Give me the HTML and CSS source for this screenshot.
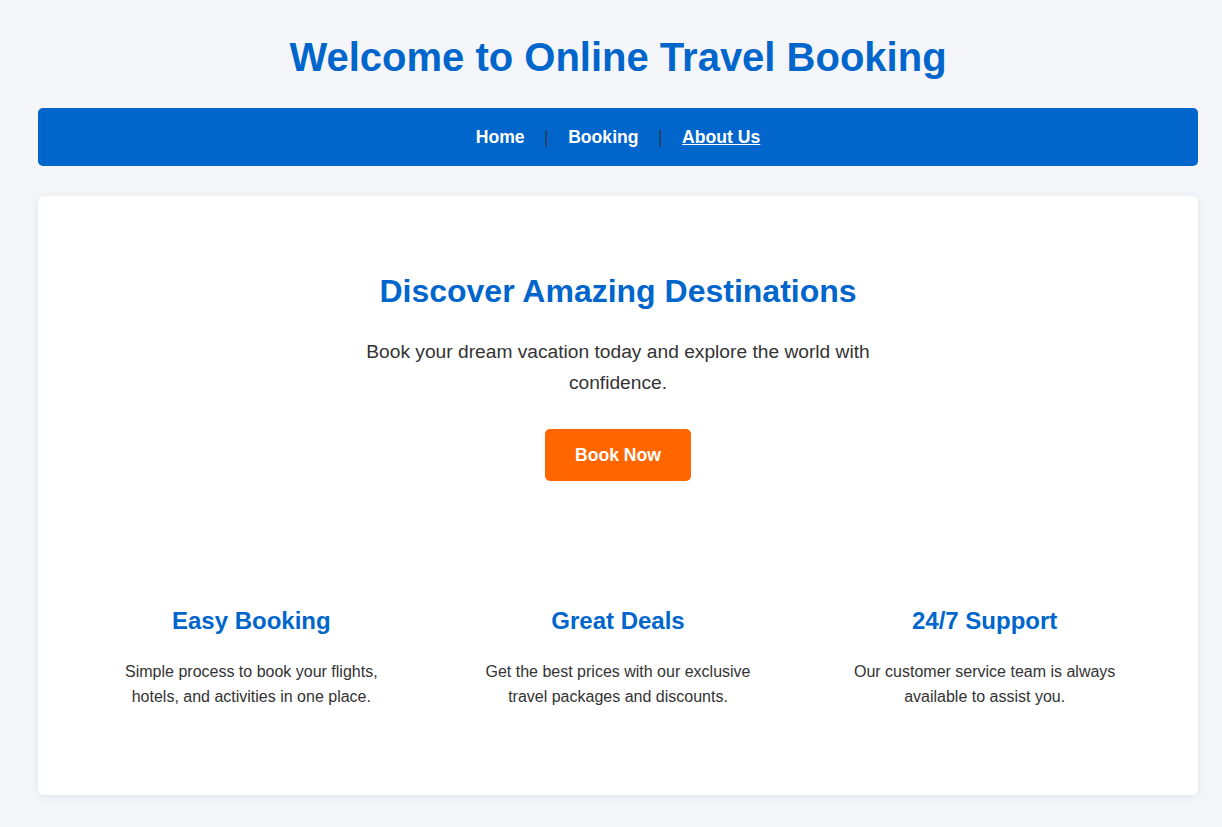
FILE: index.html
```html
<!DOCTYPE html>
<html lang="en">
<head>
<meta charset="utf-8">
<title>Online Travel Booking</title>
<link rel="stylesheet" href="styles.css">
</head>
<body>
<div class="page">
  <header class="site-header">
    <h1 class="site-title">Welcome to Online Travel Booking</h1>
  </header>
  <nav class="nav">
    <a href="#" class="nav-link">Home</a>
    <span class="nav-sep">|</span>
    <a href="#" class="nav-link">Booking</a>
    <span class="nav-sep">|</span>
    <a href="#" class="nav-link nav-link-active">About Us</a>
  </nav>
  <main class="card">
    <section class="hero">
      <h2 class="hero-title">Discover Amazing Destinations</h2>
      <p class="hero-text">Book your dream vacation today and explore the world with confidence.</p>
      <a href="#" class="btn">Book Now</a>
    </section>
    <section class="features">
      <div class="feature">
        <h3 class="feature-title">Easy Booking</h3>
        <p class="feature-text">Simple process to book your flights, hotels, and activities in one place.</p>
      </div>
      <div class="feature">
        <h3 class="feature-title">Great Deals</h3>
        <p class="feature-text">Get the best prices with our exclusive travel packages and discounts.</p>
      </div>
      <div class="feature">
        <h3 class="feature-title">24/7 Support</h3>
        <p class="feature-text">Our customer service team is always available to assist you.</p>
      </div>
    </section>
  </main>
</div>
</body>
</html>
```
FILE: styles.css
```css
* { box-sizing: border-box; }
html, body { margin: 0; padding: 0; }
body {
  background: #f5f6fa;
  font-family: "Liberation Sans", Arial, sans-serif;
  color: #333333;
  line-height: 1.6;
}
.page {
  padding: 0 24px 30px 38px;
}
.site-header {
  padding-top: 25px;
  padding-bottom: 19px;
  text-align: center;
}
.site-title {
  margin: 0;
  font-size: 40px;
  line-height: 64px;
  color: #0066cc;
  font-weight: bold;
}
.nav {
  height: 58px;
  background: #0066cc;
  border-radius: 5px;
  display: flex;
  align-items: center;
  justify-content: center;
  gap: 19.5px;
}
.nav-link {
  color: #ffffff;
  font-weight: bold;
  font-size: 17.6px;
  text-decoration: none;
}
.nav-link-active { text-decoration: underline; }
.nav-sep {
  color: #333a4a;
  font-size: 17.6px;
}
.card {
  margin-top: 30px;
  background: #ffffff;
  border-radius: 6px;
  box-shadow: 0 2px 10px rgba(0, 0, 0, 0.08);
  padding: 50px 40px 55px;
}
.hero {
  text-align: center;
  display: flex;
  flex-direction: column;
  align-items: center;
  padding-bottom: 89px;
}
.hero-title {
  margin: 27px 0 27px;
  font-size: 32px;
  line-height: 37px;
  color: #0066cc;
}
.hero-text {
  margin: 0 0 31px;
  font-size: 19.2px;
  max-width: 540px;
}
.btn {
  display: inline-block;
  background: #ff6600;
  color: #ffffff;
  font-weight: bold;
  font-size: 17.6px;
  line-height: 20px;
  padding: 16px 30px;
  border-radius: 5px;
  text-decoration: none;
}
.features {
  display: grid;
  grid-template-columns: repeat(3, 1fr);
  gap: 20px;
}
.feature {
  padding: 32px 30px 30px;
  text-align: center;
}
.feature-title {
  margin: 0 0 18px;
  font-size: 24px;
  line-height: 38.4px;
  color: #0066cc;
}
.feature-text {
  margin: 0;
  font-size: 16px;
}
```
